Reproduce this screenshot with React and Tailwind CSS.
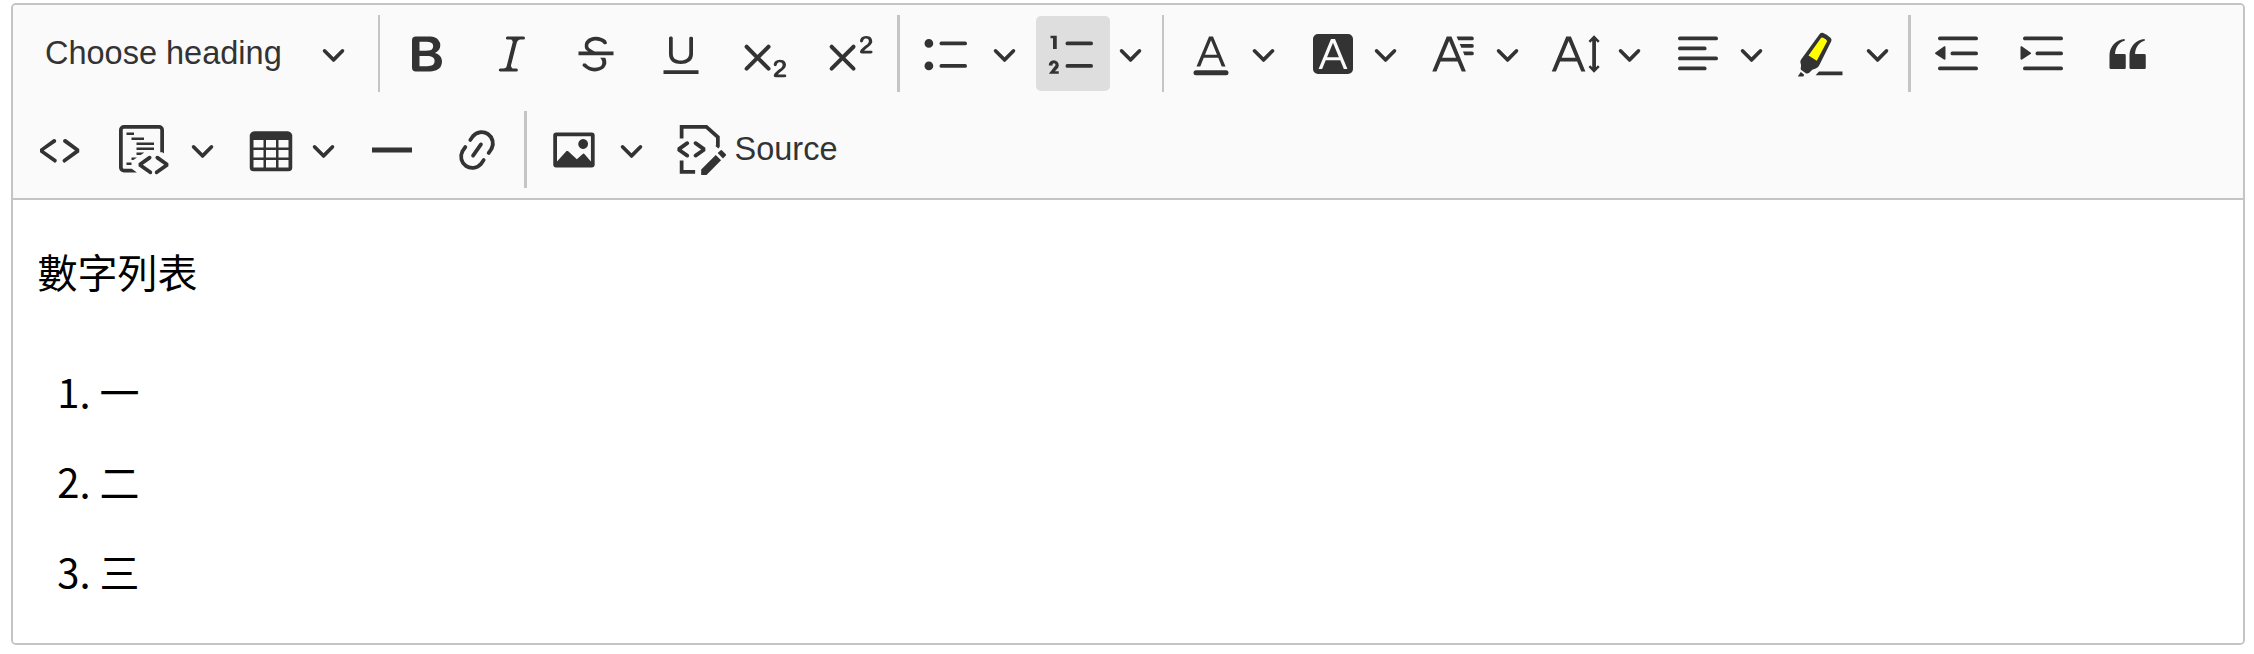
const ICONS = {
  bold: 'M10.187 17H5.773c-.637 0-1.092-.138-1.364-.415-.273-.277-.409-.718-.409-1.323V4.738c0-.617.14-1.062.419-1.332.279-.27.73-.406 1.354-.406h4.68c.69 0 1.288.041 1.793.124.506.083.96.242 1.36.478.341.197.644.447.906.75a3.262 3.262 0 0 1 .808 2.162c0 1.401-.722 2.426-2.167 3.075C15.05 10.175 16 11.315 16 13.01a3.756 3.756 0 0 1-2.296 3.504 6.1 6.1 0 0 1-1.517.377c-.571.073-1.238.11-2 .11zm-.217-6.217H7v4.087h3.069c1.977 0 2.965-.69 2.965-2.072 0-.707-.256-1.22-.768-1.537-.512-.319-1.277-.478-2.296-.478zM7 5.13v3.619h2.606c.729 0 1.292-.067 1.69-.2a1.6 1.6 0 0 0 .91-.765c.165-.267.247-.566.247-.897 0-.707-.26-1.176-.778-1.409-.519-.232-1.31-.348-2.375-.348H7z',
  italic: 'm9.586 14.633.021.004c-.036.335.095.655.393.962.082.083.173.15.274.201h1.474a.6.6 0 1 1 0 1.2H5.304a.6.6 0 0 1 0-1.2h1.15c.474-.07.809-.182 1.005-.334.157-.122.291-.32.404-.597l2.416-9.55a1.053 1.053 0 0 0-.281-.823 1.12 1.12 0 0 0-.442-.296H8.15a.6.6 0 0 1 0-1.2h6.443a.6.6 0 1 1 0 1.2h-1.195c-.376.056-.65.155-.823.296-.215.175-.423.439-.623.79l-2.366 9.347z',
  strike: 'M7 16.4c-.8-.4-1.5-.9-2.2-1.5a.6.6 0 0 1-.2-.5l.3-.6h1c1 1.2 2.1 1.7 3.7 1.7 1 0 1.8-.3 2.3-.6.6-.4.6-1.2.6-1.3.2-1.2-.9-2.1-.9-2.1h2.1c.3.7.4 1.2.4 1.7v.8l-.6 1.2c-.6.8-1.1 1-1.6 1.2a6 6 0 0 1-2.4.6c-1 0-1.8-.3-2.5-.6zM6.8 9L6 8.3c-.4-.5-.5-.8-.5-1.6 0-.7.1-1.3.5-1.8.4-.6 1-1 1.6-1.3a6.3 6.3 0 0 1 4.7 0 4 4 0 0 1 1.7 1l.3.7c0 .1.2.4-.2.7-.4.2-.9.1-1 0a3 3 0 0 0-1.2-1c-.4-.2-1-.3-2-.4-.7 0-1.4.2-2 .6-.8.6-1 .8-1 1.5 0 .8.5 1 1.2 1.5.6.4 1.1.7 1.9 1H6.8zM3 10.5V9h14v1.5z',
  underline: 'M3 18v-1.5h14V18zm2.2-8V3.6c0-.4.4-.6.8-.6.3 0 .7.2.7.6v6.2c0 2 1.3 2.8 3.2 2.8 1.9 0 3.4-.9 3.4-2.9V3.6c0-.3.4-.5.8-.5.3 0 .7.2.7.5V10c0 2.7-2.2 4-4.9 4-2.6 0-4.7-1.2-4.7-4z',
  sub: 'm7.03 10.349 3.818-3.819a.8.8 0 1 1 1.132 1.132L8.16 11.48l3.819 3.818a.8.8 0 1 1-1.132 1.132L7.03 12.61l-3.818 3.82a.8.8 0 1 1-1.132-1.132L5.9 11.48 2.08 7.662A.8.8 0 1 1 3.212 6.53l3.818 3.82zm8.147 7.829h2.549c.254 0 .447.05.58.152a.49.49 0 0 1 .201.413.54.54 0 0 1-.159.393c-.105.108-.266.162-.48.162h-3.594c-.245 0-.435-.066-.572-.197a.621.621 0 0 1-.205-.463c0-.114.044-.265.132-.453a1.62 1.62 0 0 1 .288-.444c.433-.436.824-.81 1.172-1.122.348-.312.597-.517.747-.615.267-.183.49-.368.667-.553.177-.185.312-.375.405-.57.093-.194.139-.384.139-.57a1.008 1.008 0 0 0-.554-.917 1.197 1.197 0 0 0-.56-.133c-.426 0-.761.182-1.005.546a2.332 2.332 0 0 0-.164.39 1.609 1.609 0 0 1-.258.488c-.096.114-.237.17-.423.17a.558.558 0 0 1-.405-.156.568.568 0 0 1-.161-.427c0-.218.05-.446.151-.683.101-.238.252-.453.452-.646s.454-.349.762-.467a2.998 2.998 0 0 1 1.081-.178c.498 0 .923.076 1.274.228a1.916 1.916 0 0 1 1.004 1.032 1.984 1.984 0 0 1-.156 1.794c-.2.32-.405.572-.613.754-.208.182-.558.468-1.048.857-.49.39-.826.691-1.008.906a2.703 2.703 0 0 0-.24.309z',
  sup: 'M15.677 8.678h2.549c.254 0 .447.05.58.152a.49.49 0 0 1 .201.413.54.54 0 0 1-.159.393c-.105.108-.266.162-.48.162h-3.594c-.245 0-.435-.066-.572-.197a.621.621 0 0 1-.205-.463c0-.114.044-.265.132-.453a1.62 1.62 0 0 1 .288-.444c.433-.436.824-.81 1.172-1.122.348-.312.597-.517.747-.615.267-.183.49-.368.667-.553.177-.185.312-.375.405-.57.093-.194.139-.384.139-.57a1.008 1.008 0 0 0-.554-.917 1.197 1.197 0 0 0-.56-.133c-.426 0-.761.182-1.005.546a2.332 2.332 0 0 0-.164.39 1.609 1.609 0 0 1-.258.488c-.096.114-.237.17-.423.17a.558.558 0 0 1-.405-.156.568.568 0 0 1-.161-.427c0-.218.05-.446.151-.683.101-.238.252-.453.452-.646s.454-.349.762-.467a2.998 2.998 0 0 1 1.081-.178c.498 0 .923.076 1.274.228a1.916 1.916 0 0 1 1.004 1.032 1.984 1.984 0 0 1-.156 1.794c-.2.32-.405.572-.613.754-.208.182-.558.468-1.048.857-.49.39-.826.691-1.008.906a2.703 2.703 0 0 0-.24.309zM7.03 10.349l3.818-3.819a.8.8 0 1 1 1.132 1.132L8.16 11.48l3.819 3.818a.8.8 0 1 1-1.132 1.132L7.03 12.61l-3.818 3.82a.8.8 0 1 1-1.132-1.132L5.9 11.48 2.08 7.662A.8.8 0 1 1 3.212 6.53l3.818 3.82z',
  bullets: 'M7 5.75c0 .414.336.75.75.75h9.5a.75.75 0 1 0 0-1.5h-9.5a.75.75 0 0 0-.75.75zm-6 0C1 4.784 1.777 4 2.75 4c.966 0 1.75.777 1.75 1.75 0 .966-.777 1.75-1.75 1.75C1.784 7.5 1 6.723 1 5.75zm6 9c0 .414.336.75.75.75h9.5a.75.75 0 1 0 0-1.5h-9.5a.75.75 0 0 0-.75.75zm-6 0c0-.966.777-1.75 1.75-1.75.966 0 1.75.777 1.75 1.75 0 .966-.777 1.75-1.75 1.75-.966 0-1.75-.777-1.75-1.75z',
  numbers: 'M7 5.75c0 .414.336.75.75.75h9.5a.75.75 0 1 0 0-1.5h-9.5a.75.75 0 0 0-.75.75zM3.5 3v5H2V3.7H1v-1h2.5V3zM.343 17.857l2.59-3.257H2.92a.6.6 0 1 0-1.04 0H.302a2 2 0 1 1 3.995 0h-.001c-.048.405-.16.734-.333.988-.175.254-.59.692-1.244 1.312H4.3v1h-4l.043-.043zM7 14.75a.75.75 0 0 1 .75-.75h9.5a.75.75 0 1 1 0 1.5h-9.5a.75.75 0 0 1-.75-.75z',
  color: 'M12.4 10.3 10 4.5l-2.4 5.8h4.8zm.5 1.2H7.1L5.7 15H4.2l5-12h1.6l5 12h-1.5L12.9 11.5zm3.1 7H4a1 1 0 0 1 0-2h12a1 1 0 0 1 0 2z',
  background: 'M4 2h12a2 2 0 0 1 2 2v12a2 2 0 0 1-2 2H4a2 2 0 0 1-2-2V4a2 2 0 0 1 2-2zm8.38 9.262H7.62L10 5.506l2.38 5.756zm.532 1.285L14.34 16h1.426L10.804 4H9.196L4.234 16H5.66l1.428-3.453h5.824z',
  family: 'M11.03 3h6.149a.75.75 0 1 1 0 1.5h-5.514L11.03 3zm1.27 3h4.879a.75.75 0 1 1 0 1.5h-4.244L12.3 6zm1.27 3h3.609a.75.75 0 1 1 0 1.5h-2.973L13.57 9zm-2.754 2.5L8.038 4.785 5.261 11.5h5.555zm.62 1.5H4.641l-1.666 4.028H1.312l5.789-14h1.875l5.789 14h-1.663L11.436 13z',
  size: 'M9.816 11.5L7.038 4.785 4.261 11.5h5.555zm.62 1.5H3.641l-1.666 4.028H.312l5.789-14h1.875l5.789 14h-1.663L10.436 13zm7.55 2.279l.779-.779.707.707-2.265 2.265-2.193-2.265.707-.707.765.765V4.825c0-.042 0-.083.002-.123l-.77.77-.707-.707L17.207 2.5l2.265 2.265-.707.707-.782-.782c.002.043.003.089.003.135v10.454z',
  align: 'M2 3.75c0 .414.336.75.75.75h14.5a.75.75 0 1 0 0-1.5H2.75a.75.75 0 0 0-.75.75zm0 8c0 .414.336.75.75.75h14.5a.75.75 0 1 0 0-1.5H2.75a.75.75 0 0 0-.75.75zm0 4c0 .414.336.75.75.75h9.929a.75.75 0 1 0 0-1.5H2.75a.75.75 0 0 0-.75.75zm0-8c0 .414.336.75.75.75h9.929a.75.75 0 1 0 0-1.5H2.75a.75.75 0 0 0-.75.75z',
  marker: 'M9.8 2.1Q10.4 1.3 11.3 1.6 13.2 2.4 14.3 3.6 14.8 4.2 14.5 4.9L9.7 14.5Q9.3 15.5 8.3 15.8L6.9 16.3 5.8 17.4Q4.9 18.1 4.2 17.6L2.5 16.4Q2.1 16 2.4 14.9 2.5 14.4 2.2 13.6 1.9 12.9 2.5 12.1ZM10.4 3.6 5.4 10.6 8.7 12.7 12.8 5Q12.9 4.6 12.3 4.1L11.2 3.5Q10.7 3.3 10.4 3.6ZM2.3 17.2 3.7 18.3 3.3 19H1.1ZM8.244 18.5 9.59 17h9.406v1.5H8.245z',
  outdent: 'M2 3.75c0 .414.336.75.75.75h14.5a.75.75 0 1 0 0-1.5H2.75a.75.75 0 0 0-.75.75zm5 6c0 .414.336.75.75.75h9.5a.75.75 0 1 0 0-1.5h-9.5a.75.75 0 0 0-.75.75zM2.75 16.5h14.5a.75.75 0 1 0 0-1.5H2.75a.75.75 0 1 0 0 1.5zm1.618-9.55L.98 9.358a.4.4 0 0 0 .013.661l3.39 2.207A.4.4 0 0 0 5 11.892V7.275a.4.4 0 0 0-.632-.326z',
  indent: 'M2 3.75c0 .414.336.75.75.75h14.5a.75.75 0 1 0 0-1.5H2.75a.75.75 0 0 0-.75.75zm5 6c0 .414.336.75.75.75h9.5a.75.75 0 1 0 0-1.5h-9.5a.75.75 0 0 0-.75.75zM2.75 16.5h14.5a.75.75 0 1 0 0-1.5H2.75a.75.75 0 1 0 0 1.5zM1.632 6.95 5.02 9.358a.4.4 0 0 1-.013.661l-3.39 2.207A.4.4 0 0 1 1 11.892V7.275a.4.4 0 0 1 .632-.326z',
  quote: 'M3 10.423a6.5 6.5 0 0 1 6.056-6.408l.038.67C6.448 5.423 5.354 7.663 5.22 10H9c.552 0 .5.432.5.986v4.511c0 .554-.448.503-1 .503h-5c-.552 0-.5-.449-.5-1.003v-4.574zm8 0a6.5 6.5 0 0 1 6.056-6.408l.038.67c-2.646.739-3.74 2.979-3.873 5.315H17c.552 0 .5.432.5.986v4.511c0 .554-.448.503-1 .503h-5c-.552 0-.5-.449-.5-1.003v-4.574z',
  code: 'm12.5 5.7 5.2 3.9v1.3l-5.6 4c-.1.2-.3.2-.5.2-.3-.1-.6-.7-.6-1l.3-.4 4.7-3.5L11.5 7l-.2-.2c-.1-.3-.1-.6 0-.8.2-.2.5-.4.8-.4a.8.8 0 0 1 .4.1zm-5.2 0L2 9.6v1.3l5.6 4c.1.2.3.2.5.2.3-.1.7-.7.6-1 0-.1 0-.3-.2-.4l-5-3.5L8.2 7l.2-.2c.1-.3.1-.6 0-.8-.2-.2-.5-.4-.8-.4a.8.8 0 0 0-.3.1z',
  codeBlock: 'M12.87 12.61a.75.75 0 0 1-.089.976l-.085.07-3.154 2.254 3.412 2.414a.75.75 0 0 1 .237.95l-.057.095a.75.75 0 0 1-.95.237l-.096-.058-4.272-3.022-.003-1.223 4.01-2.867a.75.75 0 0 1 1.047.174zm2.795-.231.095.057 4.011 2.867-.003 1.223-4.272 3.022-.095.058a.75.75 0 0 1-.88-.151l-.07-.086-.058-.095a.75.75 0 0 1 .15-.88l.087-.07 3.412-2.414-3.154-2.253-.085-.071a.75.75 0 0 1 .862-1.207zM16 0a2 2 0 0 1 2 2v9.354l-.663-.492-.837-.001V2a.5.5 0 0 0-.5-.5H2a.5.5 0 0 0-.5.5v15a.5.5 0 0 0 .5.5h3.118L7.156 19H2a2 2 0 0 1-2-2V2a2 2 0 0 1 2-2h14zM5.009 15l.003 1H3v-1h2.009zm2.188-2-1.471 1H5v-1h2.197zM10 11v.095L8.668 12H7v-1h3zm4-2v1H7V9h7zm0-2v1H7V7h7zm-4-2v1H5V5h5zM6 3v1H3V3h3z',
  table: 'M3 6v3h4V6H3zm0 4v3h4v-3H3zm0 4v3h4v-3H3zm5 3h4v-3H8v3zm5 0h4v-3h-4v3zm4-4v-3h-4v3h4zm0-4V6h-4v3h4zm1.5 8a1.5 1.5 0 0 1-1.5 1.5H3A1.5 1.5 0 0 1 1.5 17V4c.222-.863 1.068-1.5 2-1.5h13c.932 0 1.778.637 2 1.5v13zM12 13v-3H8v3h4zm0-4V6H8v3h4z',
  line: 'M2 9h16v2H2z',
  link: 'm11.077 15 .991-1.416a.75.75 0 1 1 1.229.86l-1.148 1.64a.748.748 0 0 1-.217.206 5.251 5.251 0 0 1-8.503-5.955.741.741 0 0 1 .12-.274l1.147-1.639a.75.75 0 1 1 1.228.86L4.933 10.7l.006.003a3.75 3.75 0 0 0 6.132 4.294l.006.004zm5.494-5.335a.748.748 0 0 1-.12.274l-1.147 1.639a.75.75 0 1 1-1.228-.86l.86-1.23a3.75 3.75 0 0 0-6.144-4.301l-.86 1.229a.75.75 0 0 1-1.229-.86l1.148-1.64a.748.748 0 0 1 .217-.206 5.251 5.251 0 0 1 8.503 5.955zm-4.563-2.532a.75.75 0 0 1 .184 1.045l-3.155 4.505a.75.75 0 1 1-1.229-.86l3.155-4.506a.75.75 0 0 1 1.045-.184z',
  image: 'M6.91 10.54c.26-.23.64-.21.88.03l3.36 3.14 2.23-2.06a.64.64 0 0 1 .87 0l2.52 2.97V4.5H3.2v10.12l3.71-4.08zm10.27-7.51c.6 0 1.09.47 1.09 1.05v11.84c0 .59-.49 1.06-1.09 1.06H2.79c-.6 0-1.09-.47-1.09-1.06V4.08c0-.58.49-1.05 1.1-1.05h14.38zm-5.22 5.56a1.96 1.96 0 1 1 3.4-1.96 1.96 1.96 0 0 1-3.4 1.96z',
  source: 'M4.06 6.64a.75.75 0 0 1 .958 1.15l-.085.07L2.29 9.75l2.646 1.89c.302.216.4.62.232.951l-.058.095a.75.75 0 0 1-.951.232l-.095-.058-3.5-2.5V9.14l3.496-2.5zm4.194 6.22a.75.75 0 0 1-.958-1.149l.085-.07 2.643-1.89-2.646-1.89a.75.75 0 0 1-.232-.952l.058-.095a.75.75 0 0 1 .95-.232l.096.058 3.5 2.5v1.22l-3.496 2.5zm7.644-.836 2.122 2.122-5.825 5.809-2.125-.005.003-2.116zm2.539-1.847 1.414 1.414a.5.5 0 0 1 0 .707l-1.06 1.06-2.122-2.12 1.061-1.061a.5.5 0 0 1 .707 0z',
};

function Icon({ name }) {
  return (
    <svg viewBox="0 0 20 20" className="h-[50px] w-[50px] shrink-0" fill="currentColor">
      {name === 'marker' && (
        <path fill="#ffff00" d="M10.4 3 4.6 11 9 13.4 13.5 4.8Z" />
      )}
      {name === 'source' && (
        <path fill="none" stroke="currentColor" strokeWidth="1.5" d="M2.25 5.4V.75h9.9L16.75 4.8V8.4l-.4.5M2.25 14.2v4.55h5.4" />
      )}
      <path fillRule={name === 'marker' ? 'evenodd' : 'nonzero'} d={ICONS[name]} />
    </svg>
  );
}

function Chevron() {
  return (
    <svg viewBox="0 0 10 10" className="h-[25px] w-[25px] shrink-0" fill="currentColor">
      <path d="M.941 4.523a.75.75 0 1 1 1.06-1.06l3.006 3.005 3.005-3.005a.75.75 0 1 1 1.06 1.06l-3.549 3.55a.75.75 0 0 1-1.168-.136L.941 4.523z" />
    </svg>
  );
}

function Button({ icon, active }) {
  return (
    <button
      className={`flex h-[75px] w-[74.75px] shrink-0 items-center justify-center rounded-[5px] ${active ? 'bg-[#dedede]' : ''}`}
    >
      <Icon name={icon} />
    </button>
  );
}

function Split({ icon, active }) {
  return (
    <div className="flex w-[116.25px] shrink-0 items-center">
      <Button icon={icon} active={active} />
      <button className="flex h-[75px] w-[41px] items-center justify-center">
        <Chevron />
      </button>
    </div>
  );
}

function Dropdown({ icon }) {
  return (
    <button className="flex h-[75px] w-[112px] shrink-0 items-center justify-between pr-[9px] pl-[12.5px]">
      <Icon name={icon} />
      <Chevron />
    </button>
  );
}

const Separator = ({ thick }) => (
  <div className={`h-[77px] shrink-0 bg-[#c4c4c4] ${thick ? 'w-[3px]' : 'w-[2px]'}`} />
);

export default function App() {
  return (
    <div className="h-[654px] bg-white pt-[3px] pr-[9px] pl-[11px]">
      <div className="flex h-[642px] flex-col overflow-hidden rounded-[5px] border-2 border-[#c4c4c4]">
        <div className="flex h-[195px] shrink-0 flex-col gap-[19px] border-b-2 border-[#c4c4c4] bg-[#fafafa] pt-[10px] pl-[9.5px] font-['Liberation_Sans',Arial,sans-serif] text-[32.5px] leading-[50px] text-[#333]">
          <div className="flex h-[77px] items-center gap-[9.77px]">
            <button className="flex h-[75px] w-[345.75px] shrink-0 items-center justify-between pr-[22px] pl-[22.5px]">
              <span className="relative -top-px whitespace-nowrap">Choose heading</span>
              <Chevron />
            </button>
            <Separator />
            <Button icon="bold" />
            <Button icon="italic" />
            <Button icon="strike" />
            <Button icon="underline" />
            <Button icon="sub" />
            <Button icon="sup" />
            <Separator thick />
            <Split icon="bullets" />
            <Split icon="numbers" active />
            <Separator />
            <Dropdown icon="color" />
            <Dropdown icon="background" />
            <Dropdown icon="family" />
            <Dropdown icon="size" />
            <Dropdown icon="align" />
            <Split icon="marker" />
            <Separator thick />
            <Button icon="outdent" />
            <Button icon="indent" />
            <Button icon="quote" />
          </div>
          <div className="flex h-[77px] items-center gap-[9.75px]">
            <Button icon="code" />
            <Split icon="codeBlock" />
            <Dropdown icon="table" />
            <Button icon="line" />
            <Button icon="link" />
            <Separator thick />
            <Split icon="image" />
            <button className="flex h-[75px] items-center gap-[9px] pl-[13px]">
              <Icon name="source" />
              <span className="relative -top-px">Source</span>
            </button>
          </div>
        </div>
        <div className="flex-1 bg-white pt-[36px] pl-[24.5px] font-['Noto_Sans_CJK_TC',sans-serif] text-[40px] leading-[70px] text-black">
          <p>數字列表</p>
          <ol className="mt-[40px] list-outside list-decimal pl-[62px] leading-[90px]">
            <li>一</li>
            <li>二</li>
            <li>三</li>
          </ol>
        </div>
      </div>
    </div>
  );
}
